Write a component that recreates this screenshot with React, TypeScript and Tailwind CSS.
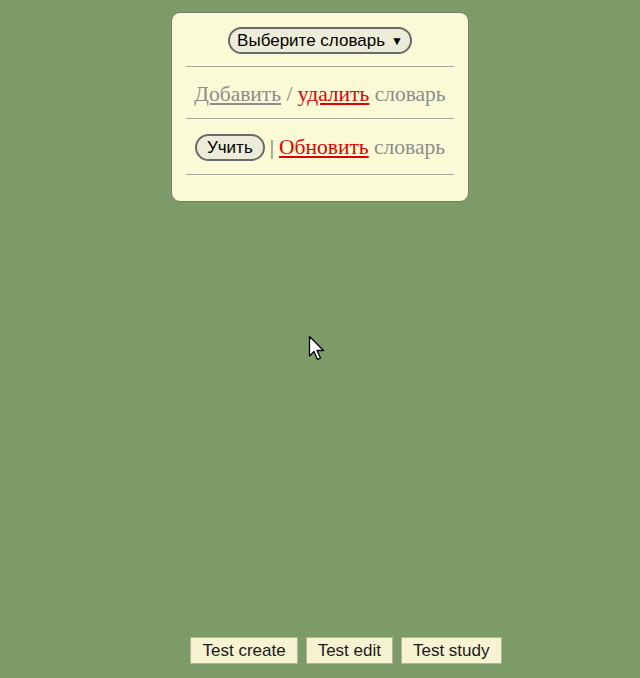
import React from "react";

const sans = { fontFamily: '"Liberation Sans", Arial, sans-serif' };
const serif = { fontFamily: '"Liberation Serif", "Times New Roman", serif' };

function Cursor() {
  return (
    <svg className="absolute left-[308px] top-[335px]" width="20" height="28" viewBox="0 0 20 28">
      <path d="M1.5 1.5 L1.5 21 L6 16.5 L9.5 24.5 L12.5 23 L9 15.5 L15.5 15.5 Z" fill="#fff" stroke="#000" strokeWidth="1.3" strokeLinejoin="round" />
    </svg>
  );
}

export default function App() {
  return (
    <div className="relative flex h-[678px] flex-col items-center bg-[#7d9a69]" style={sans}>
      <div className="mt-3 w-[298px] rounded-[9px] border border-[#7a7a6a] bg-[#fafad6] px-[14px] pt-[14px] pb-[26px]">
        <div className="flex justify-center">
          <button className="flex h-[27px] items-center gap-[6px] rounded-full border-2 border-[#6a6a6a] bg-[#ececd8] pl-[7px] pr-[7px] text-[17px] text-black">
            Выберите словарь
            <span className="text-[12px]">▼</span>
          </button>
        </div>
        <hr className="mt-[12px] border-t border-[#a8a89a]" />
        <div className="pt-[16px] pb-[12px] text-center text-[21.5px] leading-[23px] text-[#8d8d8d]" style={serif}>
          <a className="underline">Добавить</a> / <a className="text-[#e00000] underline">удалить</a> словарь
        </div>
        <hr className="border-t border-[#a8a89a]" />
        <div className="flex items-center justify-center gap-[5px] pt-[15px] pb-[13px] text-[21.5px] leading-[23px] text-[#8d8d8d]" style={serif}>
          <button className="flex h-[27px] items-center rounded-full border-2 border-[#6a6a6a] bg-[#ececd8] px-[10px] text-[17px] text-black" style={sans}>
            Учить
          </button>
          <span className="text-[#707070]">|</span>
          <span>
            <a className="text-[#e00000] underline">Обновить</a> словарь
          </span>
        </div>
        <hr className="border-t border-[#a8a89a]" />
      </div>
      <div className="mt-auto mb-[14px] ml-[52px] flex gap-2">
        {["Test create", "Test edit", "Test study"].map((t) => (
          <button key={t} className="h-[27px] border border-[#b4b49a] bg-[#f6f2d2] px-[11px] text-[17px] text-[#1a1a1a]">
            {t}
          </button>
        ))}
      </div>
      <Cursor />
    </div>
  );
}
